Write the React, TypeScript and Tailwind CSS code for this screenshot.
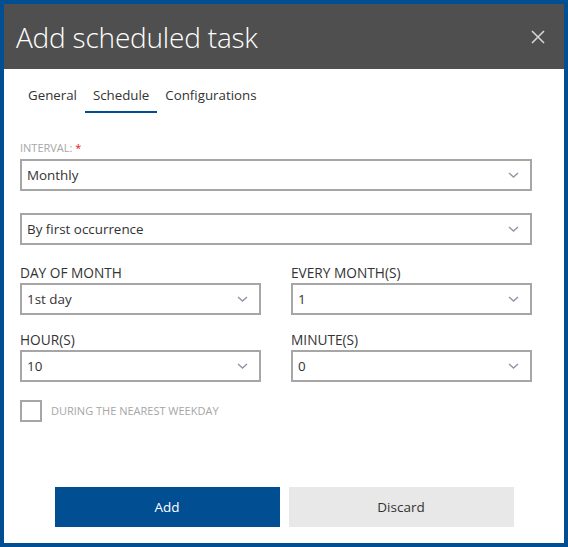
import React from 'react';

const FONT = "font-['Open_Sans','Noto_Sans',sans-serif]";

const Chevron = () => (
  <svg width="11" height="6" viewBox="0 0 11 6" className="shrink-0">
    <polyline points="1,1 5.5,5 10,1" fill="none" stroke="#8c96a8" strokeWidth="1.4" />
  </svg>
);

const Select = ({ value }: { value: string }) => (
  <div className="h-[32px] border-2 border-[#a6a6a6] flex items-center justify-between pl-[5px] pr-[11px] text-[13.4px] text-[#333]">
    <span>{value}</span>
    <Chevron />
  </div>
);

const Field = ({ label, value }: { label: string; value: string }) => (
  <div className="flex flex-col">
    <div className="text-[13.7px] leading-5 text-[#333]">{label}</div>
    <Select value={value} />
  </div>
);

export default function App() {
  const tabs = ['General', 'Schedule', 'Configurations'];
  return (
    <div className={`w-[568px] h-[547px] border-4 border-[#024e93] bg-white flex flex-col ${FONT}`}>
      {/* Header */}
      <div className="h-[65px] shrink-0 bg-[#4f4f4f] flex items-center justify-between pl-3 pr-[19px]">
        <h1 className="text-[28px] font-light text-white tracking-[-0.2px]">Add scheduled task</h1>
        <svg width="14" height="14" viewBox="0 0 14 14">
          <path d="M1 1L13 13M13 1L1 13" stroke="#d6d6d6" strokeWidth="1.6" />
        </svg>
      </div>

      {/* Tabs */}
      <div className="flex pl-4 pt-4">
        {tabs.map((t) => (
          <div
            key={t}
            className={`px-2 pb-[6px] text-[13.3px] leading-5 text-[#333] border-b-2 ${
              t === 'Schedule' ? 'border-[#024e93]' : 'border-transparent'
            }`}
          >
            {t}
          </div>
        ))}
      </div>

      {/* Body */}
      <div className="px-4 pt-[28px] flex flex-col">
        <div className="text-[11px] leading-[14px] text-[#a6a6a6] mb-[4px]">
          INTERVAL: <span className="text-[#e81123]">*</span>
        </div>
        <div className="pr-4">
          <Select value="Monthly" />
        </div>
        <div className="pr-4 mt-[22px]">
          <Select value="By first occurrence" />
        </div>

        <div className="grid grid-cols-2 gap-x-[30px] pr-4 mt-[18px]">
          <Field label="DAY OF MONTH" value="1st day" />
          <Field label="EVERY MONTH(S)" value="1" />
        </div>
        <div className="grid grid-cols-2 gap-x-[30px] pr-4 mt-[15px]">
          <Field label="HOUR(S)" value="10" />
          <Field label="MINUTE(S)" value="0" />
        </div>

        <div className="flex items-center mt-[18px] gap-[9px]">
          <div className="w-[22px] h-[22px] border-2 border-[#a6a6a6]" />
          <span className="text-[11px] text-[#a6a6a6]">DURING THE NEAREST WEEKDAY</span>
        </div>
      </div>

      {/* Footer */}
      <div className="flex justify-center gap-[9px] mt-[65px]">
        <button className="w-[225px] h-[40px] bg-[#024e93] text-white text-[13.5px]">Add</button>
        <button className="w-[225px] h-[40px] bg-[#e8e8e8] text-[#333] text-[13.5px]">Discard</button>
      </div>
    </div>
  );
}
